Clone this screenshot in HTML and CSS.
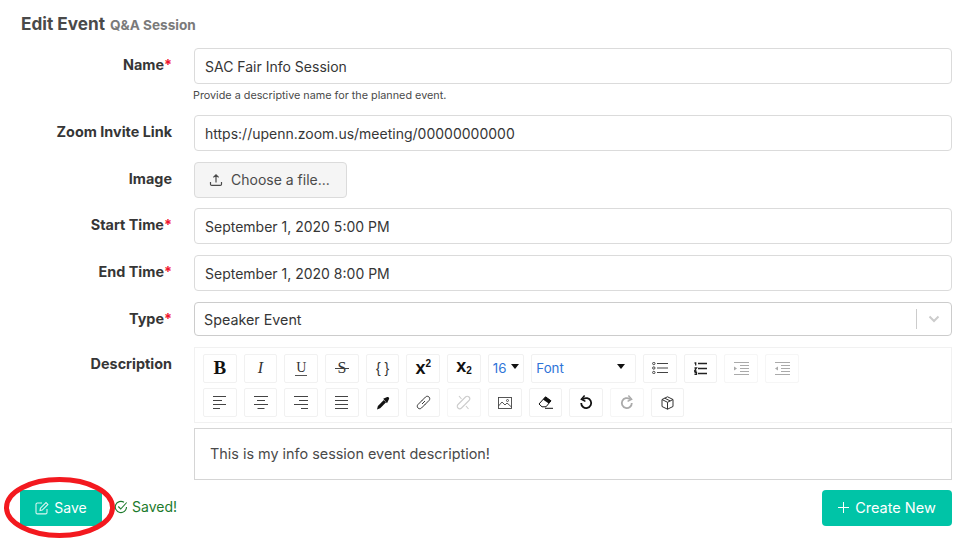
FILE: index.html
```html
<!DOCTYPE html>
<html>
<head>
	<title>Edit Event</title>

	<link rel="stylesheet" href="styles.css">
</head>
<body>

	<div class="page">
		<h1 class="title">Edit Event <small class="subtitle">Q&amp;A Session</small></h1>

		<form class="event-form">
			<label class="field-label">Name<span class="req">*</span></label>
			<div>
				<div class="input">SAC Fair Info Session</div>
				<p class="help">Provide a descriptive name for the planned event.</p>
			</div>

			<label class="field-label">Zoom Invite Link</label>
			<div class="input">https://upenn.zoom.us/meeting/00000000000</div>

			<label class="field-label">Image</label>
			<div>
				<span class="file-btn">
					<svg class="file-icon" viewBox="0 0 14 14" width="14" height="14" fill="none" stroke="#4a4a4a" stroke-width="1.2"><path d="M7 9.5V2M4.4 4.4 7 1.8l2.6 2.600M1.500 9v2.200c0 .7.5 1.200 1.200 1.200h8.600c.7 0 1.200-.5 1.200-1.200V9"/></svg>
					Choose a file...
				</span>
			</div>

			<label class="field-label">Start Time<span class="req">*</span></label>
			<div class="input">September 1, 2020 5:00 PM</div>

			<label class="field-label">End Time<span class="req">*</span></label>
			<div class="input">September 1, 2020 8:00 PM</div>

			<label class="field-label">Type<span class="req">*</span></label>
			<div class="select">
				<span class="select-value">Speaker Event</span>
				<span class="select-sep"></span>
				<svg class="select-arrow" viewBox="0 0 12 8" width="12" height="8" fill="none" stroke="#ccc" stroke-width="2"><path d="M1.500 1.500 6 6l4.500-4.500"/></svg>
			</div>

			<label class="field-label">Description</label>
			<div class="editor">
				<div class="toolbar">
					<div class="tool-row">
						<span class="tool t-bold">B</span>
						<span class="tool t-italic">I</span>
						<span class="tool t-under"><span>U</span></span>
						<span class="tool t-strike"><span>S</span></span>
						<span class="tool t-code">{ }</span>
						<span class="tool t-script"><span>x<sup>2</sup></span></span>
						<span class="tool t-script t-low"><span>x<sub>2</sub></span></span>
						<span class="tool tool-size">16<i class="caret"></i></span>
						<span class="tool tool-font">Font<i class="caret"></i></span>
						<span class="tool">
							<svg viewBox="0 0 16 12" width="16" height="12" fill="none" stroke="#444"><circle cx="1.800" cy="1.500" r="1.200"/><circle cx="1.800" cy="6" r="1.200"/><circle cx="1.800" cy="10.500" r="1.200"/><path d="M5 1.500h11M5 6h11M5 10.500h11"/></svg>
						</span>
						<span class="tool">
							<svg viewBox="0 0 13 13" width="13" height="13" fill="none" stroke="#222" stroke-width="1.300"><path d="M4 1.500h9M4 6.500h9M4 11.500h9M.5 1h1.200v2.500M.5 6h2L.5 9h2M.5 10.500h2v2H.5"/></svg>
						</span>
						<span class="tool tool-off">
							<svg viewBox="0 0 16 13" width="16" height="13" fill="none" stroke="#aaa"><path d="M1 .5h15M7 3.500h9M7 6.500h9M7 9.500h9M1 12.500h15"/><path d="M1 4.500 4 6.500 1 8.500z" fill="#aaa" stroke="none"/></svg>
						</span>
						<span class="tool tool-off">
							<svg viewBox="0 0 16 13" width="16" height="13" fill="none" stroke="#aaa"><path d="M1 .5h15M7 3.500h9M7 6.500h9M7 9.500h9M1 12.500h15"/><path d="M4 4.500 1 6.500 4 8.500z" fill="#aaa" stroke="none"/></svg>
						</span>
					</div>
					<div class="tool-row">
						<span class="tool">
							<svg viewBox="0 0 13 13" width="13" height="13" fill="none" stroke="#444"><path d="M0 .5h13M0 4.500h9M0 8.500h13M0 12.500h7"/></svg>
						</span>
						<span class="tool">
							<svg viewBox="0 0 14 13" width="14" height="13" fill="none" stroke="#444"><path d="M0 .5h14M3 4.500h8M0 8.500h14M3.500 12.500h7"/></svg>
						</span>
						<span class="tool">
							<svg viewBox="0 0 14 13" width="14" height="13" fill="none" stroke="#444"><path d="M0 .5h14M5 4.500h9M0 8.500h14M7 12.500h7"/></svg>
						</span>
						<span class="tool">
							<svg viewBox="0 0 13 13" width="13" height="13" fill="none" stroke="#444"><path d="M0 .5h13M0 4.500h13M0 8.500h13M0 12.500h13"/></svg>
						</span>
						<span class="tool">
							<svg viewBox="0 0 14 14" width="14" height="14"><path d="M1 13.500l.9-3.600 5.900-5.900 2.300 2.300-5.900 5.900z" fill="#111"/><path d="M7.200 2.800l4-1.800c.6-.3 1.300 0 1.700.5.400.5.400 1.200 0 1.700l-1.900 4z" fill="#111"/></svg>
						</span>
						<span class="tool">
							<svg viewBox="0 0 15 15" width="15" height="15" fill="none" stroke="#222" stroke-width=".9"><path d="M6 9 9 6M6 5.500 2 9.500c-1 1-1 2.500 0 3.500s2.500 1 3.500 0l4-4M5.500 6 9.500 2c1-1 2.500-1 3.500 0s1 2.500 0 3.500l-4 4"/></svg>
						</span>
						<span class="tool tool-off">
							<svg viewBox="0 0 15 15" width="15" height="15" fill="none" stroke="#ccc" stroke-width="1.100"><path d="M6 5.500 2 9.500c-1 1-1 2.500 0 3.500s2.500 1 3.500 0l4-4M5.500 6 9.500 2c1-1 2.500-1 3.500 0s1 2.500 0 3.500l-4 4M3 1l2.500 3M10 11l2.500 3"/></svg>
						</span>
						<span class="tool">
							<svg viewBox="0 0 14 12" width="14" height="12" fill="none" stroke="#444" stroke-width=".9"><rect x=".5" y=".5" width="13" height="11"/><path d="M.5 9 4 5l3 3 2-2 4.500 4"/><circle cx="9.500" cy="3.500" r="1"/></svg>
						</span>
						<span class="tool">
							<svg viewBox="0 0 15 13" width="15" height="13"><path d="M1 8 7.500.8l5.500 4-5 6H4z" fill="#fff" stroke="#111"/><path d="M5 3.500 7.500.8l5.500 4-2.300 2.800z" fill="#111"/><path d="M7 12.300h8" stroke="#111"/></svg>
						</span>
						<span class="tool">
							<svg viewBox="0 0 14 15" width="14" height="15" fill="none" stroke="#111" stroke-width="1.800"><path d="M4 4.200a5 5 0 1 1-1.800 3.800"/><path d="M5.600.6 2.400 4.200 6.400 6.300" stroke-width="1.500"/></svg>
						</span>
						<span class="tool tool-off">
							<svg viewBox="0 0 14 15" width="14" height="15" fill="none" stroke="#aaa" stroke-width="1.800"><path d="M10 4.200a5 5 0 1 0 1.800 3.800"/><path d="M8.400.6l3.200 3.600-4 2.100" stroke-width="1.500"/></svg>
						</span>
						<span class="tool">
							<svg viewBox="0 0 13 14" width="13" height="14" fill="none" stroke="#333"><path d="M6.500.8 12 3.500v7L6.500 13.200 1 10.500v-7zM1 3.500l5.500 2.800L12 3.500M6.500 6.300v6.900M3.700 2.200l5.500 2.700"/></svg>
						</span>
					</div>
				</div>
				<div class="editor-body">This is my info session event description!</div>
			</div>
		</form>

		<div class="actions">
			<div class="save-group">
				<span class="btn">
					<svg viewBox="0 0 14 14" width="14" height="14" fill="none" stroke="#fff" stroke-width="1.100" opacity=".85"><path d="M12 8v3.500c0 .8-.6 1.400-1.400 1.400H2.400c-.8 0-1.400-.6-1.400-1.400V3.400C1 2.600 1.600 2 2.400 2H7"/><path d="M5 9.500l.4-2.300L11 1.500l1.900 1.900-5.600 5.700z"/></svg>
					Save
				</span>
				<span class="saved">
					<svg viewBox="0 0 14 14" width="14" height="14" fill="none" stroke="#1c7a2c" stroke-width="1.100"><path d="M12.500 7a5.600 5.600 0 1 1-2.500-4.700"/><path d="M4.300 6.500 6.700 9l6-6.500"/></svg>
					Saved!
				</span>
			</div>
			<span class="btn btn-new">
				<svg viewBox="0 0 11 11" width="11" height="11" fill="none" stroke="#fff"><path d="M5.500 0v11M0 5.500h11"/></svg>
				Create New
			</span>
		</div>

		<!-- red marker ring drawn over the save button -->
		<svg class="ring" viewBox="0 0 111 61" width="111" height="61" fill="none" stroke="#f3191f" stroke-width="5"><ellipse cx="55.500" cy="30.500" rx="53" ry="28"/></svg>
	</div>

</body>
</html>
```
FILE: styles.css
```css
* {
	box-sizing: border-box;
}

body {
	margin: 0;
	background: #fff;
	color: #363636;
	font-family: Inter, "Liberation Sans", sans-serif;
	font-size: 14px;
}

.page {
	position: relative;
	height: 543px;
	overflow: hidden;
	padding: 13px 21px 0 20px;
}

.title {
	display: flex;
	align-items: baseline;
	gap: 5px;
	margin: 0 0 0 1px;
	font-size: 17.2px;
	line-height: 22px;
	font-weight: 700;
	color: #4a4a4a;
}

.subtitle {
	font-size: 13.6px;
	font-weight: 700;
	color: #7a7a7a;
}

.event-form {
	display: grid;
	grid-template-columns: 152px 758px;
	column-gap: 22px;
	row-gap: 10.75px;
	margin-top: 12px;
}

.field-label {
	padding-top: 6px;
	text-align: right;
	font-size: 14.4px;
	font-weight: 700;
	line-height: 21px;
}

.req {
	color: #f0142f;
}

.input {
	height: 36px;
	padding: 0 10px;
	border: 1px solid #dbdbdb;
	border-radius: 4px;
	line-height: 36px;
	color: #363636;
	white-space: nowrap;
}

.help {
	margin: 4px 0 0 -1px;
	font-size: 10.8px;
	line-height: 16px;
	color: #4a4a4a;
}

.file-btn {
	display: inline-flex;
	align-items: center;
	gap: 8px;
	width: 153px;
	height: 36px;
	padding-left: 14px;
	background: #f5f5f5;
	border: 1px solid #dbdbdb;
	border-radius: 4px;
	color: #4a4a4a;
}

.select {
	display: flex;
	align-items: center;
	height: 34px;
	padding: 0 11px 0 9px;
	border: 1px solid #ccc;
	border-radius: 4px;
	font-size: 14.300px;
}

.select-value {
	flex: 1;
	padding-top: 1px;
}

.select-sep {
	width: 1px;
	height: 20px;
	background: #ccc;
	margin-right: 11px;
}

.editor {
	display: flex;
	flex-direction: column;
	gap: 5px;
}

.toolbar {
	display: flex;
	flex-direction: column;
	gap: 5.500px;
	height: 76px;
	padding: 6px 8px;
	border: 1px solid #f1f1f1;
}

.tool-row {
	display: flex;
	gap: 7px;
}

.tool {
	display: flex;
	align-items: center;
	justify-content: center;
	width: 33.7px;
	height: 29px;
	background: #fff;
	border: 1px solid #f1f1f1;
	border-radius: 2px;
	color: #111;
}

.tool-off {
	border-color: #f6f6f6;
}

.t-bold {
	font: bold 19px "Liberation Serif", serif;
}

.t-italic {
	font: italic 16px "Liberation Serif", serif;
	color: #333;
}

.t-under span {
	padding: 0 1px 1px;
	border-bottom: 1px solid #555;
	font: 14px/13px "Liberation Serif", serif;
	color: #333;
}

.t-strike span {
	position: relative;
	font: 16px "Liberation Serif", serif;
	color: #333;
}

.t-strike span::after {
	content: "";
	position: absolute;
	left: -2.500px;
	right: -2.500px;
	top: 50%;
	border-top: 1px solid #444;
}

.t-code {
	font: 14px "Liberation Sans", sans-serif;
	color: #333;
}

.t-script {
	font: bold 18px "Liberation Sans", sans-serif;
}

.t-script sup,
.t-script sub {
	font-size: 10px;
	line-height: 0;
}

.t-low span {
	margin-top: -3px;
}

.t-low sub {
	vertical-align: -2px;
}

.tool-size,
.tool-font {
	position: relative;
	justify-content: flex-start;
	padding-left: 4px;
	color: #2f73d8;
	font-size: 13.3px;
}

.tool-size {
	width: 36.5px;
}

.tool-font {
	width: 104.5px;
}

.caret {
	position: absolute;
	top: 9px;
	right: 4px;
	border: 4.500px solid transparent;
	border-top: 5px solid #111;
	border-bottom: 0;
}

.tool-font .caret {
	right: 10px;
}

.editor-body {
	height: 52px;
	padding: 0 15px;
	border: 1px solid #d5d5d5;
	font-size: 14.400px;
	line-height: 50px;
	color: #4a4a4a;
}

.actions {
	display: flex;
	justify-content: space-between;
	width: 932px;
	margin-top: 10px;
}

.save-group {
	display: flex;
	align-items: flex-start;
	gap: 12px;
}

.btn {
	display: inline-flex;
	align-items: center;
	justify-content: center;
	gap: 5px;
	width: 82px;
	height: 36px;
	background: #00c4a7;
	color: #fff;
	font-size: 14px;
}

.btn-new {
	width: 130px;
	gap: 6px;
	border-radius: 4px;
	font-size: 14.500px;
}

.saved {
	display: inline-flex;
	align-items: center;
	gap: 4px;
	height: 34px;
	color: #1c7a2c;
}

.ring {
	position: absolute;
	left: 4px;
	top: 477px;
}
```
